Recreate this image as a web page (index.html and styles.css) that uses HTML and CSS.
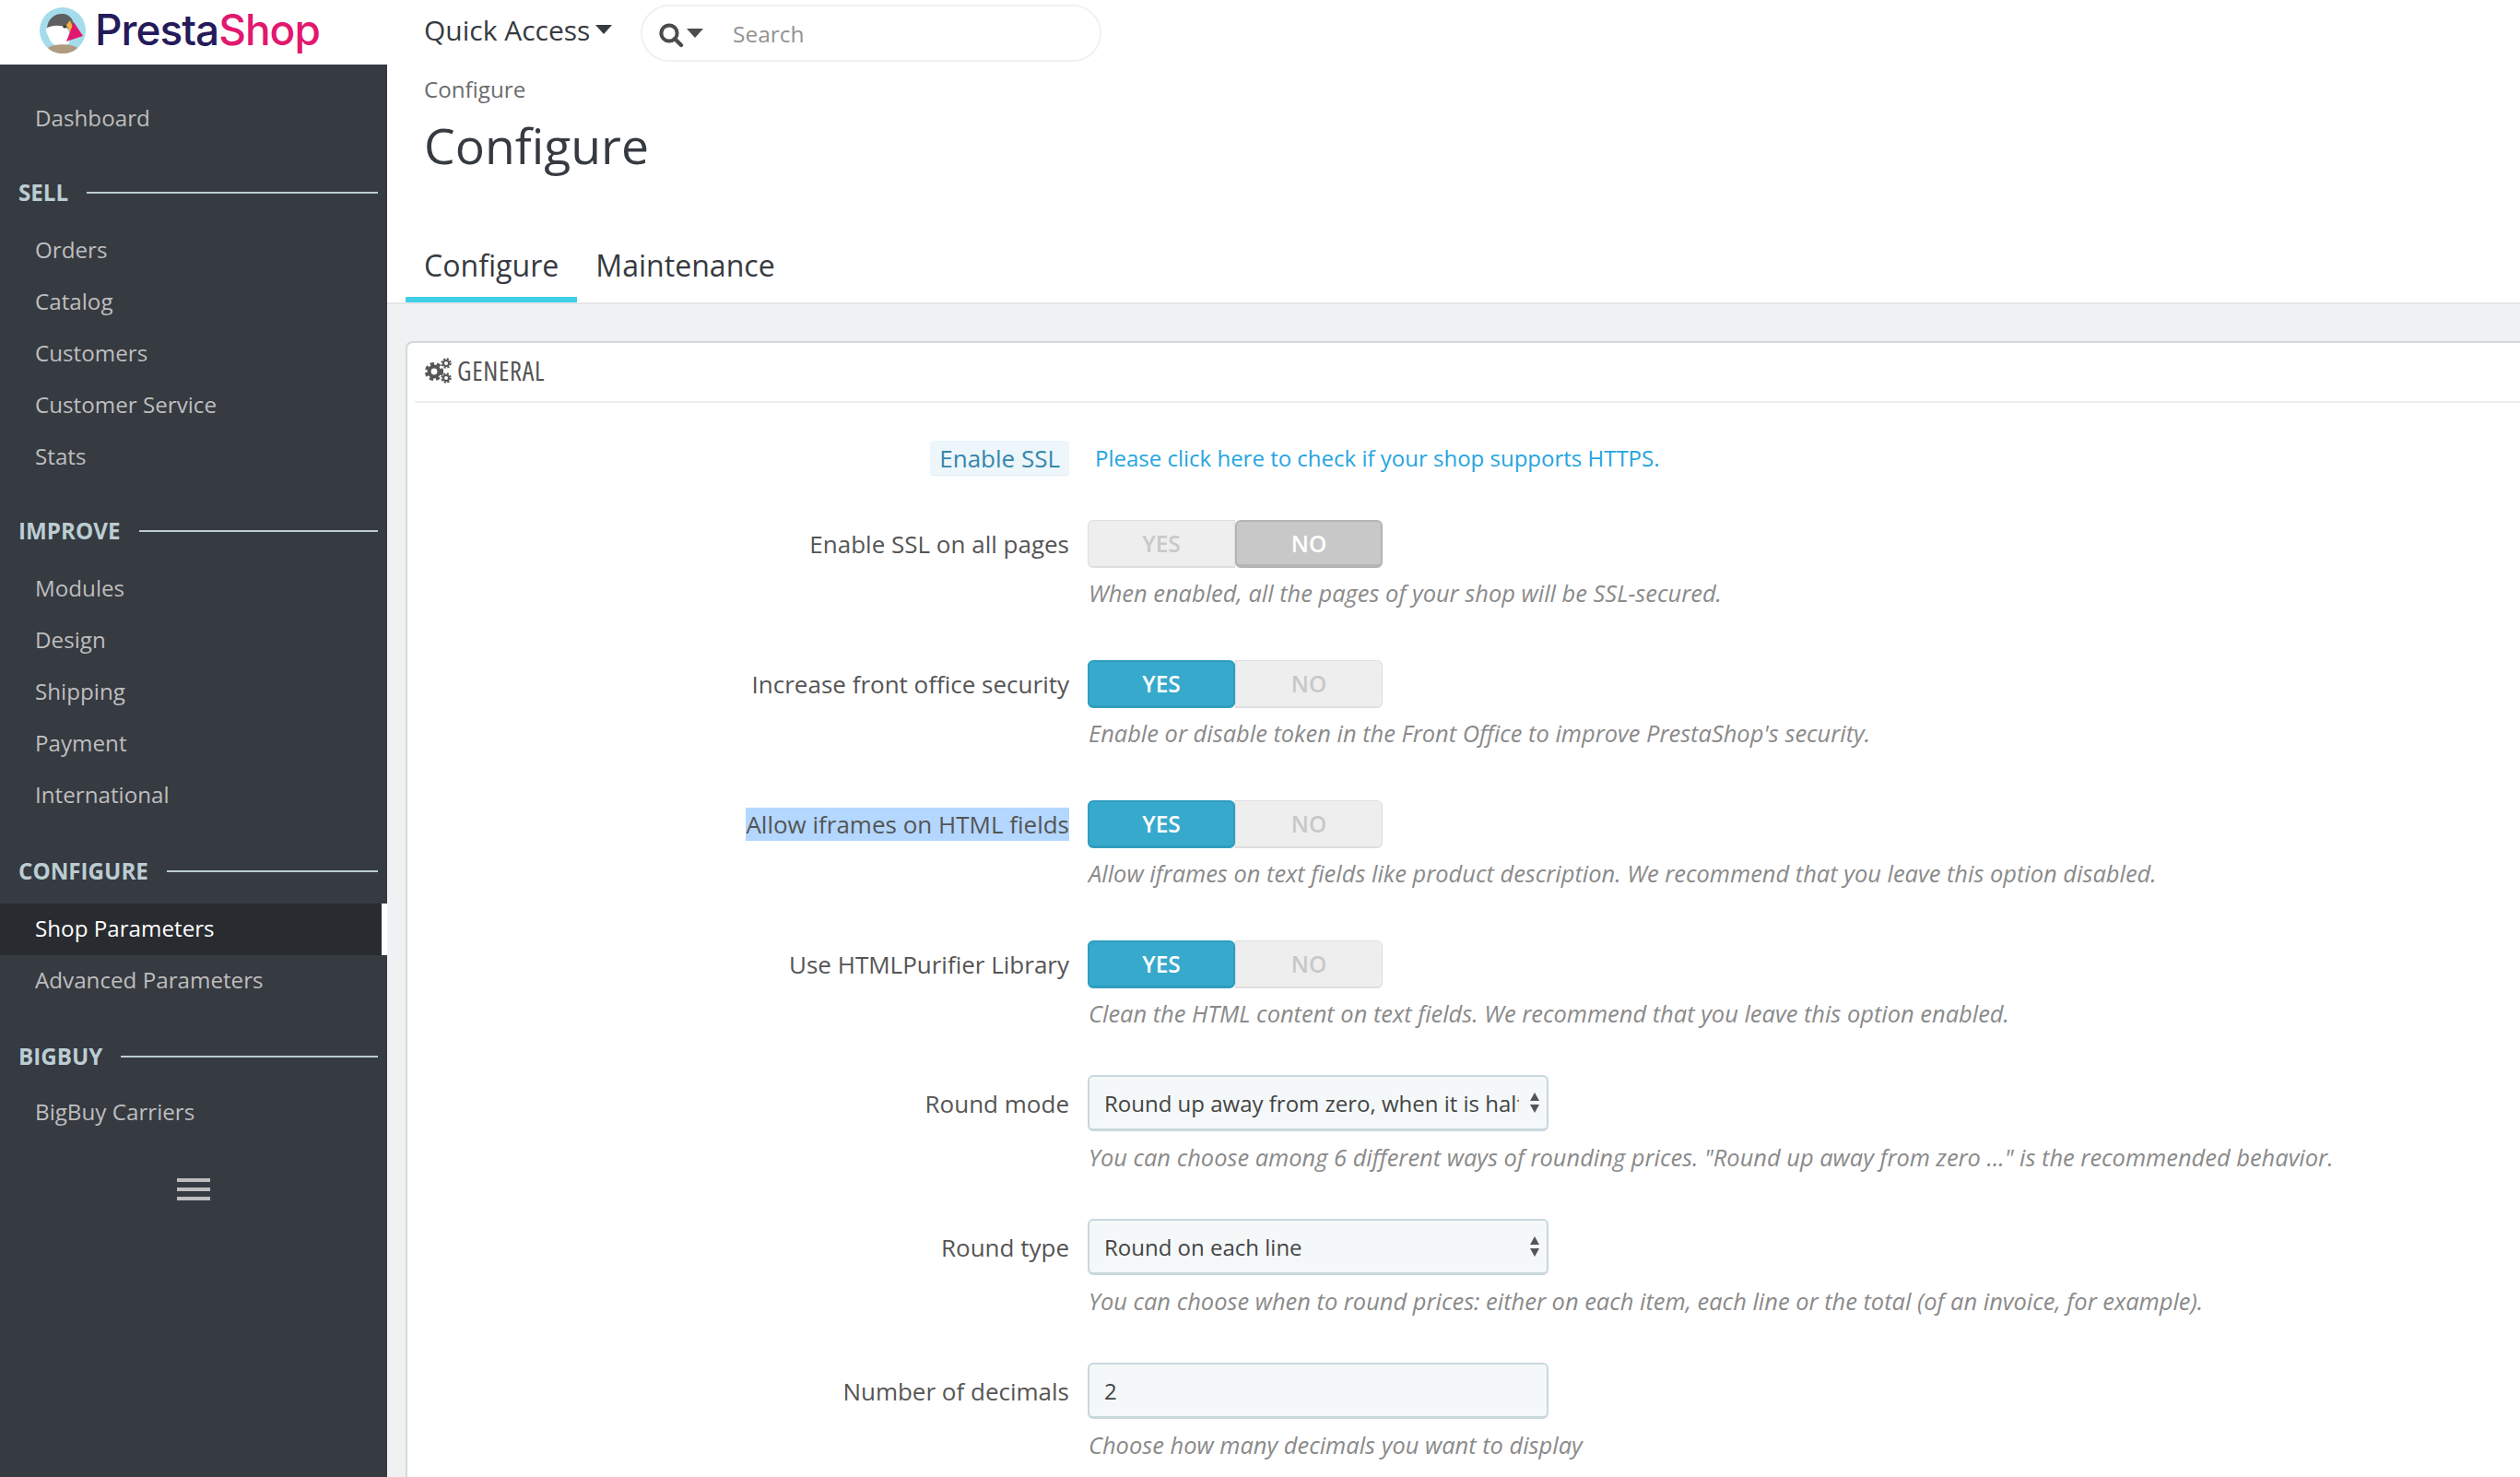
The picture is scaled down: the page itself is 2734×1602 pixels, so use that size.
FILE: index.html
```html
<!DOCTYPE html>
<html lang="en">
<head>
<meta charset="utf-8">
<title>Configure • PrestaShop</title>
<link rel="stylesheet" href="styles.css">
</head>
<body>
<header class="topbar">
  <a class="logo">
    <svg class="logo-mark" viewBox="0 0 50 50" width="50" height="50" aria-hidden="true">
      <circle cx="25" cy="25" r="25" fill="#a5dcec"/>
      <path d="M8 24C8 12 17 6 26 7c6 1 10 5 11 11l-3 7c-8-6-18-6-26-1z" fill="#5d5f60"/>
      <path d="M7 23c6-4 16-4 21-1 3 2 5 6 5 11 0 5-2 8-6 9-7 1-13-1-16-7-2-4-4-8-4-12z" fill="#fff"/>
      <path d="M29 19l4-5 3 7-2 8z" fill="#f0b23c"/>
      <path d="M37 16l10 15-18 6z" fill="#e0196e"/>
      <path d="M9 44c6-5 26-5 32 0-4 4-10 6-16 6s-12-2-16-6z" fill="#b09a80"/>
      <circle cx="27" cy="21" r="1.6" fill="#333"/>
    </svg>
    <span class="logo-word"><span class="logo-presta">Presta</span><span class="logo-shop">Shop</span></span>
  </a>
  <button class="quick" type="button">Quick Access<i class="caret caret-quick"></i></button>
  <form class="search">
    <svg class="search-icon" viewBox="0 0 28 28" width="28" height="28" aria-hidden="true">
      <circle cx="12" cy="12" r="8.6" fill="none" stroke="#4c4c4c" stroke-width="4"/>
      <path d="M18 18l7 7" stroke="#4c4c4c" stroke-width="4.4" stroke-linecap="round"/>
    </svg>
    <i class="caret caret-search"></i>
    <input class="search-input" type="text" placeholder="Search">
  </form>
</header>

<div class="shell">
  <nav class="sidebar">
    <a class="nav-item">Dashboard</a>
    <h3 class="nav-head"><span>SELL</span></h3>
    <a class="nav-item">Orders</a>
    <a class="nav-item">Catalog</a>
    <a class="nav-item">Customers</a>
    <a class="nav-item">Customer Service</a>
    <a class="nav-item">Stats</a>
    <h3 class="nav-head"><span>IMPROVE</span></h3>
    <a class="nav-item">Modules</a>
    <a class="nav-item">Design</a>
    <a class="nav-item">Shipping</a>
    <a class="nav-item">Payment</a>
    <a class="nav-item">International</a>
    <h3 class="nav-head nav-head-wide"><span>CONFIGURE</span></h3>
    <a class="nav-item is-active">Shop Parameters</a>
    <a class="nav-item">Advanced Parameters</a>
    <h3 class="nav-head"><span>BIGBUY</span></h3>
    <a class="nav-item">BigBuy Carriers</a>
    <div class="burger"><i></i><i></i><i></i></div>
  </nav>

  <main class="content">
    <div class="page-head">
      <div class="crumb">Configure</div>
      <h1 class="title">Configure</h1>
      <div class="tabs">
        <a class="tab is-current">Configure</a>
        <a class="tab">Maintenance</a>
      </div>
    </div>

    <section class="stage">
      <div class="panel">
        <div class="panel-head">
          <svg class="cogs" viewBox="0 0 30 28" width="30" height="28" aria-hidden="true">
            <g fill="none" stroke="#555">
              <circle cx="11" cy="15" r="5.4" stroke-width="4"/>
              <circle cx="11" cy="15" r="8.6" stroke-width="3" stroke-dasharray="4.2 3"/>
              <circle cx="24" cy="6" r="3" stroke-width="2"/>
              <circle cx="24" cy="6" r="4.8" stroke-width="1.8" stroke-dasharray="2.2 1.6"/>
              <circle cx="24" cy="22" r="3" stroke-width="2"/>
              <circle cx="24" cy="22" r="4.8" stroke-width="1.8" stroke-dasharray="2.2 1.6"/>
            </g>
          </svg>
          <span class="panel-title">GENERAL</span>
        </div>

        <div class="panel-body">
          <div class="row row-ssl">
            <div class="label"><span class="label-hint">Enable SSL</span></div>
            <a class="ssl-link">Please click here to check if your shop supports HTTPS.</a>
          </div>

          <div class="row row-switch">
            <div class="label">Enable SSL on all pages</div>
            <div class="switch"><span class="seg seg-yes">YES</span><span class="seg seg-no is-on">NO</span></div>
            <p class="help">When enabled, all the pages of your shop will be SSL-secured.</p>
          </div>

          <div class="row row-switch">
            <div class="label">Increase front office security</div>
            <div class="switch"><span class="seg seg-yes is-on">YES</span><span class="seg seg-no">NO</span></div>
            <p class="help">Enable or disable token in the Front Office to improve PrestaShop's security.</p>
          </div>

          <div class="row row-switch">
            <div class="label"><span class="selected">Allow iframes on HTML fields</span></div>
            <div class="switch"><span class="seg seg-yes is-on">YES</span><span class="seg seg-no">NO</span></div>
            <p class="help">Allow iframes on text fields like product description. We recommend that you leave this option disabled.</p>
          </div>

          <div class="row row-switch">
            <div class="label">Use HTMLPurifier Library</div>
            <div class="switch"><span class="seg seg-yes is-on">YES</span><span class="seg seg-no">NO</span></div>
            <p class="help">Clean the HTML content on text fields. We recommend that you leave this option enabled.</p>
          </div>

          <div class="row">
            <div class="label">Round mode</div>
            <div class="select-wrap">
              <select class="field field-select"><option>Round up away from zero, when it is half down</option></select>
              <svg class="select-arrows" viewBox="0 0 12 24" width="12" height="24" aria-hidden="true"><path d="M6 1l5 9H1zM6 23l5-9H1z" fill="#555"/></svg>
            </div>
            <p class="help">You can choose among 6 different ways of rounding prices. "Round up away from zero ..." is the recommended behavior.</p>
          </div>

          <div class="row">
            <div class="label">Round type</div>
            <div class="select-wrap">
              <select class="field field-select"><option>Round on each line</option></select>
              <svg class="select-arrows" viewBox="0 0 12 24" width="12" height="24" aria-hidden="true"><path d="M6 1l5 9H1zM6 23l5-9H1z" fill="#555"/></svg>
            </div>
            <p class="help">You can choose when to round prices: either on each item, each line or the total (of an invoice, for example).</p>
          </div>

          <div class="row">
            <div class="label">Number of decimals</div>
            <input class="field" type="text" value="2">
            <p class="help">Choose how many decimals you want to display</p>
          </div>
        </div>
      </div>
    </section>
  </main>
</div>
</body>
</html>
```
FILE: styles.css
```css
* { box-sizing: border-box; }
html, body { margin: 0; height: 1602px; overflow: hidden; background: #fff; }
body { font-family: "Open Sans", "Liberation Sans", sans-serif; color: #363a41; }
h1, h3, p { margin: 0; font-weight: normal; }
a { text-decoration: none; color: inherit; }

/* top bar */
.topbar { height: 70px; display: flex; align-items: center; }
.logo { width: 460px; padding-left: 43px; display: flex; align-items: center; gap: 10px; height: 66px; align-self: flex-start; }
.logo-mark { flex: none; }
.logo-word { font-family: Inter, "Open Sans", sans-serif; font-weight: 500; font-size: 46px; letter-spacing: -1px; line-height: 1; padding-bottom: 2px; }
.logo-presta { color: #251b5b; }
.logo-shop { color: #e2186f; }
.quick { width: 235px; padding: 0 0 6px; border: 0; background: none; text-align: left; font: 30px "Open Sans", sans-serif; color: #363a41; display: flex; align-items: center; }
.caret { display: block; width: 0; height: 0; border-left: 9px solid transparent; border-right: 9px solid transparent; border-top: 10px solid #363a41; }
.caret-quick { margin-left: 6px; }
.caret-search { border-top-color: #4c4c4c; margin-left: 3px; }
.search { width: 500px; height: 62px; margin-top: 2px; border: 2px solid #f1f1f1; border-radius: 31px; display: flex; align-items: center; padding-left: 17px; }
.search-icon { flex: none; margin-top: 3px; }
.search-input { flex: 1; min-width: 0; margin-left: 30px; margin-top: 1px; border: 0; outline: 0; background: none; font: 24.5px "Open Sans", sans-serif; color: #555; }
.search-input::placeholder { color: #929292; opacity: 1; }

/* shell */
.shell { display: flex; height: 1532px; }
.sidebar { width: 420px; flex: none; background: #363a41; padding-top: 29px; }
.nav-item { display: flex; align-items: center; height: 56px; padding-left: 38px; font-size: 24.2px; color: #bebebe; }
.nav-item.is-active { background: #282b30; color: #fff; border-right: 6px solid #fff; }
.nav-head { height: 87px; padding: 35px 10px 0 20px; display: flex; align-items: flex-start; gap: 20px; font-size: 24.2px; font-weight: 700; color: #bbcdd2; line-height: 38px; }
.nav-head-wide { height: 91px; padding-top: 37px; }
.nav-head-wide ~ .nav-item { padding-bottom: 3px; }
.nav-head::after { content: ""; flex: 1; height: 2px; margin-top: 18px; background: #bbcdd2; }
.burger { display: flex; flex-direction: column; gap: 6px; width: 36px; margin: 43px 0 0 192px; }
.burger i { display: block; height: 4px; background: #bebebe; }

/* main */
.content { flex: 1; min-width: 0; display: flex; flex-direction: column; }
.page-head { height: 260px; padding: 8px 0 0 20px; border-bottom: 2px solid #e4e6e8; }
.crumb { padding-left: 20px; font-size: 24.2px; line-height: 38px; color: #6c6c6c; }
.title { padding-left: 20px; margin-top: 4px; font-size: 53.5px; line-height: 76px; color: #363a41; }
.tabs { display: flex; margin-top: 68px; }
.tab { height: 64px; padding: 0 20px; font-size: 32.1px; line-height: 48px; color: #363a41; }
.tab.is-current { border-bottom: 6px solid #40cfe9; }
.stage { flex: 1; background: #eff1f2; padding: 40px 0 0 20px; overflow: hidden; }
.panel { height: 100%; background: #fff; border: solid #d3d8db; border-width: 2px 0 0 2px; border-top-left-radius: 8px; padding-left: 8px; }
.panel-head { height: 65px; display: flex; align-items: center; gap: 6px; padding: 0 0 4px 10px; border-bottom: 2px solid #eeeeee; }
.panel-title { font-family: "Open Sans", sans-serif; font-stretch: 75%; font-size: 28.5px; font-weight: 500; letter-spacing: 0.7px; color: #555; }
.cogs { flex: none; }
.panel-body { padding-top: 41px; }

/* form rows */
.row { display: grid; grid-template-columns: 710px 1fr; column-gap: 20px; row-gap: 9px; align-items: center; margin-bottom: 48px; }
.row-switch { padding-top: 6px; row-gap: 8px; }
.row-ssl { margin-bottom: 42px; min-height: 38px; }
.label { text-align: right; font-size: 26px; line-height: 38px; color: #555; }
.label-hint { display: inline-block; height: 38px; padding: 0 10px; background: #edf6fb; border-bottom: 1px solid #dcecf5; border-radius: 4px; color: #3586ab; }
.selected { background: #b3d7ff; }
.ssl-link { font-size: 24px; line-height: 38px; color: #25a5e0; padding-left: 8px; }
.help { grid-column: 2; font-size: 25.44px; font-style: italic; line-height: 38px; color: #8a8a8a; padding-left: 1px; }

.switch { display: flex; width: 320px; height: 52px; }
.seg { width: 160px; display: flex; align-items: center; justify-content: center; font-size: 24.5px; font-weight: 600; color: #c8c8c8; background: #eeeeee; border: 1px solid #dedede; border-bottom-width: 2px; }
.seg-yes { border-radius: 6px 0 0 6px; }
.seg-no { border-radius: 0 6px 6px 0; }
.seg-yes.is-on { background: #36a9cc; color: #fff; border: 2px solid #2f9dbe; border-bottom-width: 3px; border-radius: 6px; }
.seg-no.is-on { background: #c8c8c8; color: #fff; border: 2px solid #b4b4b4; border-bottom-width: 4px; border-radius: 6px; }

.field { display: block; width: 500px; height: 61px; padding: 0 16px; border: 2px solid #c9d7dd; border-bottom-width: 3px; border-radius: 6px; background: #f4f8f9; font: 24px "Open Sans", sans-serif; color: #444; outline: 0; }
.select-wrap { position: relative; width: 500px; }
.field-select { appearance: none; -webkit-appearance: none; padding-right: 30px; }
.select-arrows { position: absolute; top: 18px; right: 9px; pointer-events: none; }
```
